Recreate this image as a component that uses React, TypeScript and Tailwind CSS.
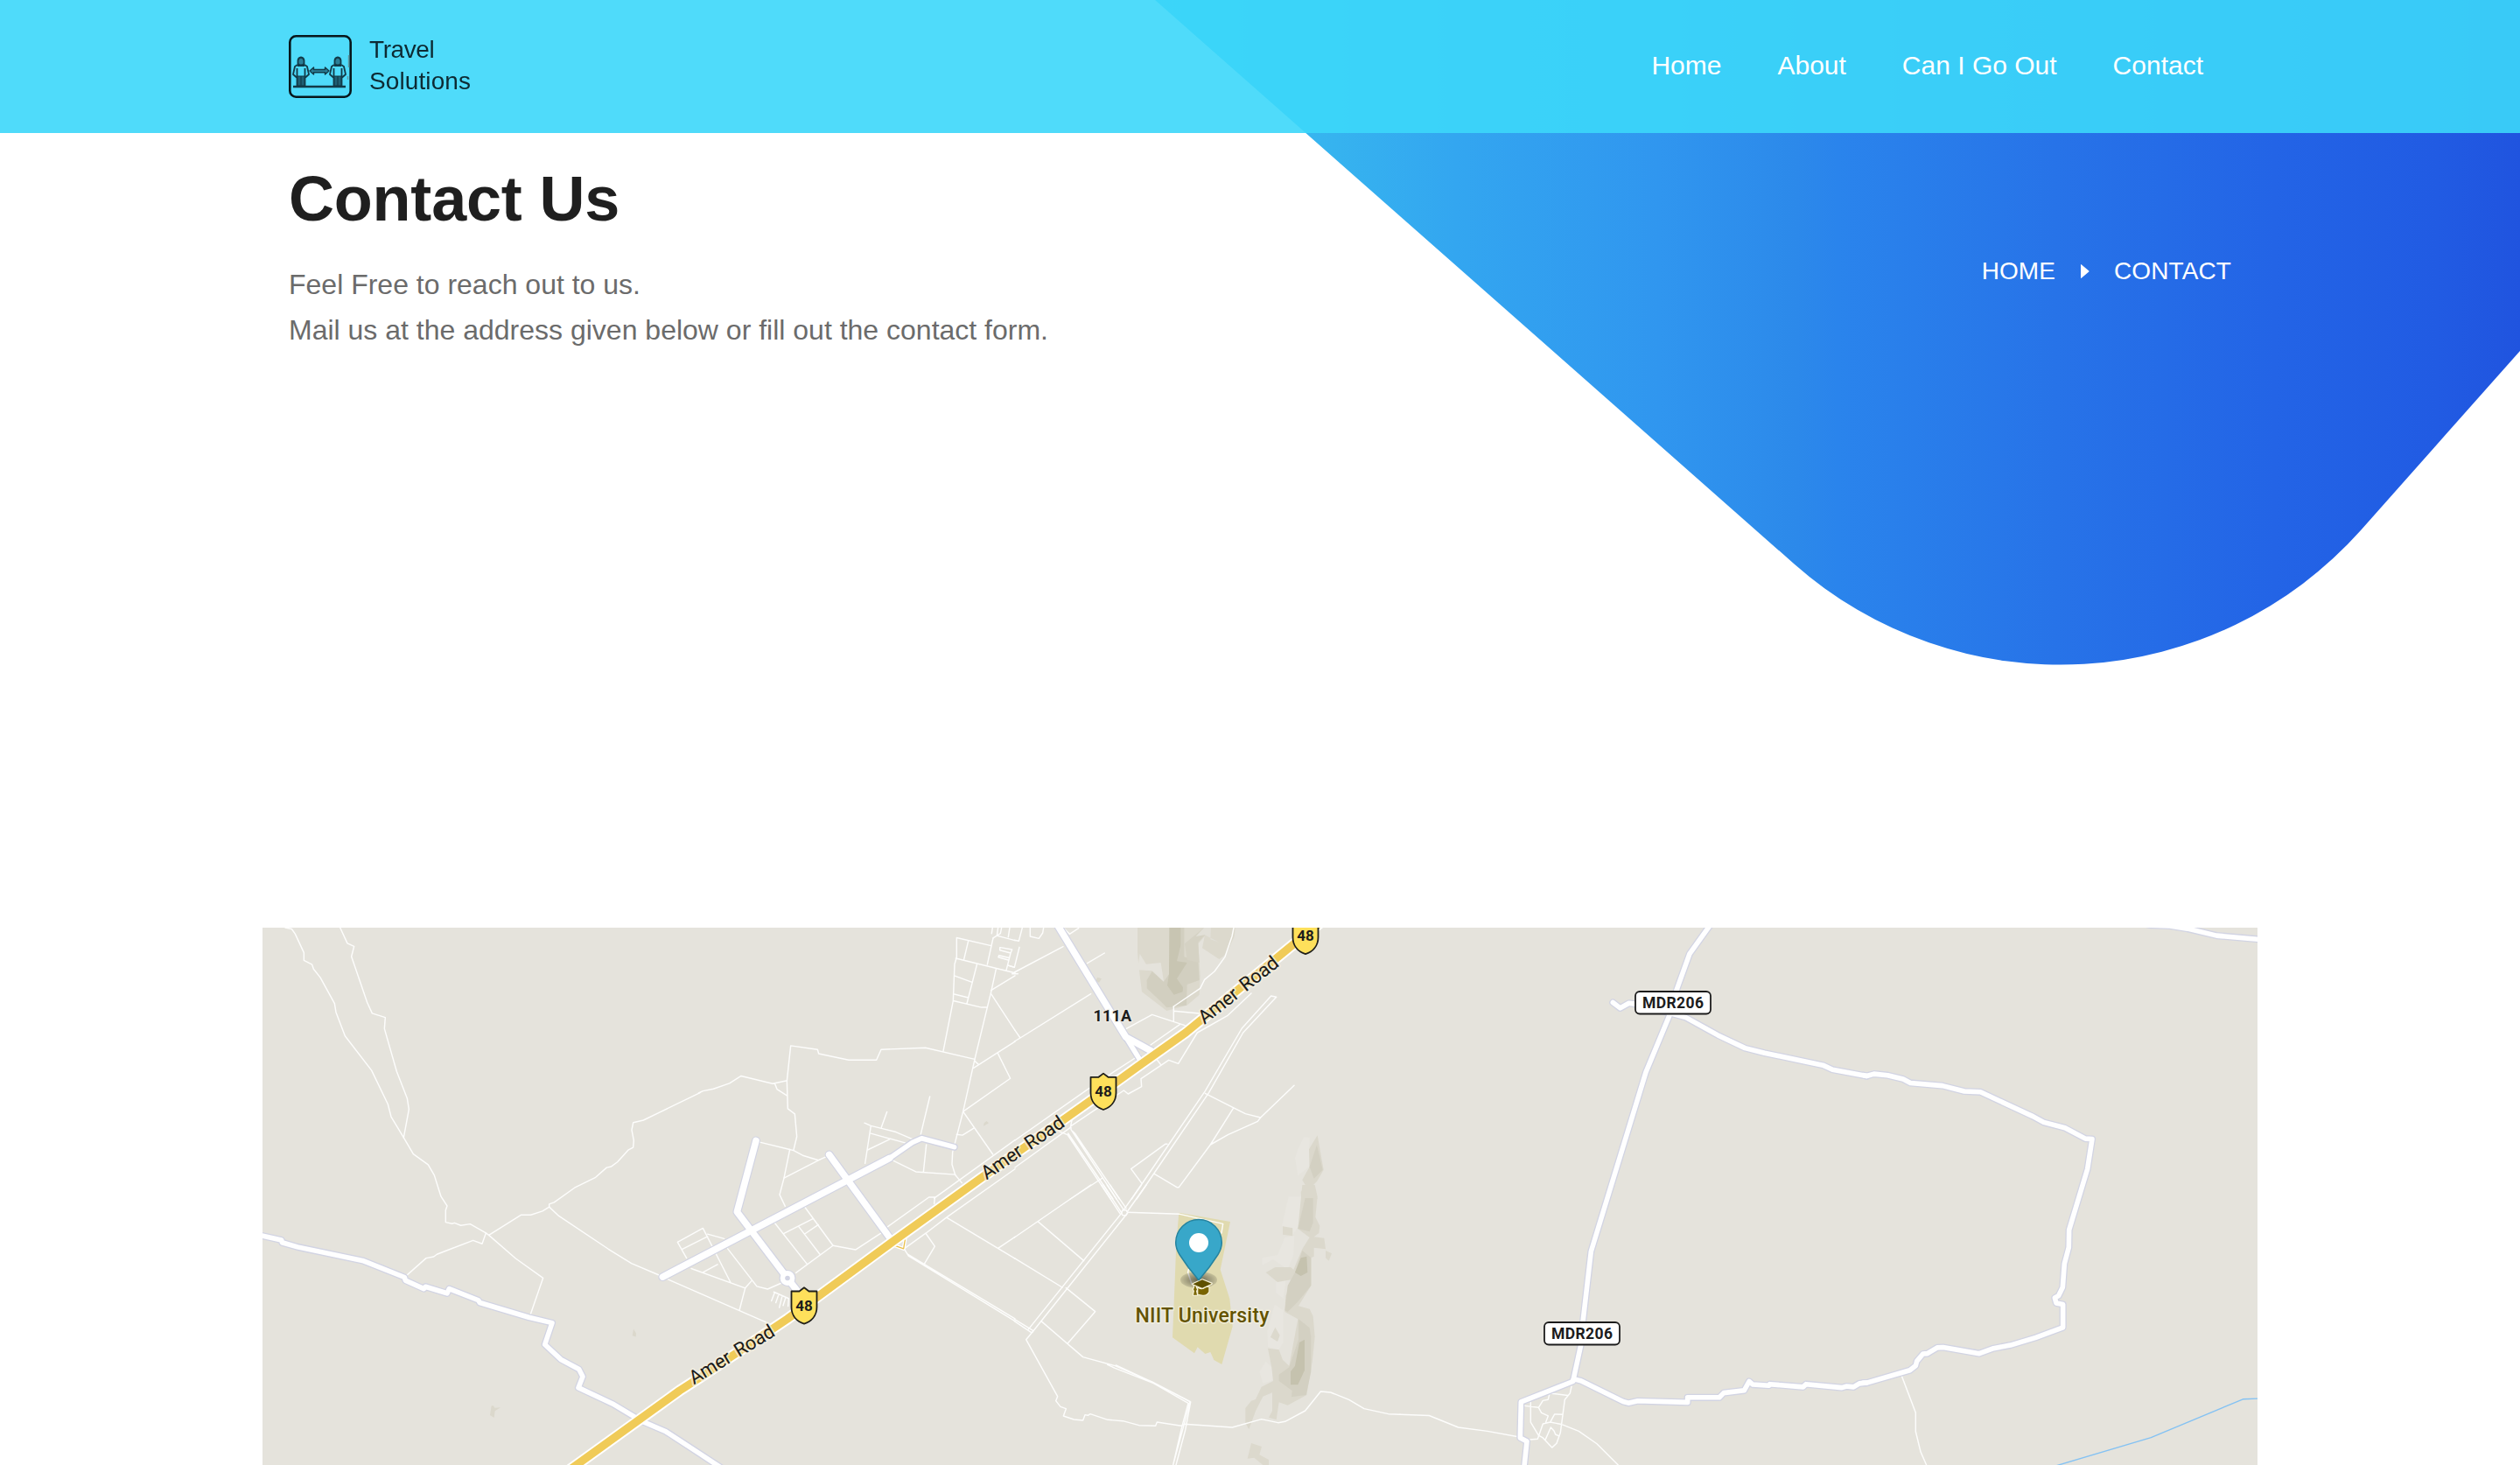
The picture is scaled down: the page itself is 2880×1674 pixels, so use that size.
import React from "react";

const NAV = ["Home", "About", "Can I Go Out", "Contact"];

type Sheet = "a" | "b" | "c" | "d" | "e" | "f";

const SHEETS: Record<Sheet, string> = {
  a: "matrix(.33333 0 0 .39796 300 1050)",
  b: "matrix(.33333 0 0 .39796 700 1050)",
  c: "matrix(.33333 0 0 .33333 1100 1050)",
  d: "matrix(.33333 0 0 .33333 1100 1354)",
  e: "matrix(.33333 0 0 .39796 1700 1050)",
  f: "matrix(.33333 0 0 .39796 2130 1050)",
};

type Shape = [Sheet, string];

const TERRAIN: [Sheet, string, string][] = [
  ["a", "M785 1398L792 1398 796 1404 816 1403 797 1413 794 1432 780 1425Z", "#dbd8cc"],
  ["a", "M1272 1177L1281 1190 1280 1200 1268 1197Z", "#dbd8cc"],
  ["c", "M463 200L477 205 468 218 456 212ZM72 710L74 700 82 693 90 700Z", "#dbd8cc"],
  ["c", "M600 30L600 115 605 170 615 250 700 315 770 296 812 260 815 195 808 85 830 60 822 100 880 138 905 120 932 60 935 30Z", "#dcd9cd"],
  ["c", "M708 30H760V130L808 145 812 210 770 225 768 296 700 304 682 285 632 238 632 210 650 180 690 215 708 190Z", "#d2cfc0"],
  ["c", "M710 30H748V90L735 145 770 150 735 205 756 235 755 250 725 260 702 228 708 190Z", "#c8c5b2"],
  ["c", "M762 85L828 30 850 36 826 60 808 80 812 150 770 140Z", "#d5d2c4"],
  ["c", "M608 120L630 155 680 150 690 215 650 178 600 175Z", "#e5e3dc"],
  ["c", "M828 30H852L850 70 880 80 830 55 800 60Z", "#e2e0d8"],
  ["c", "M1150 790L1170 748 1190 750 1188 850 1150 880 1140 820Z", "#e8e6e0"],
  ["c", "M1217 742L1238 860 1215 900 1200 915 1217 960H1162L1160 935 1180 920 1165 895 1190 850 1188 790Z", "#dbd8cc"],
  ["c", "M1215 775L1235 860 1205 890 1190 850Z", "#d3d0c2"],
  ["d", "M1118 40H1165L1150 145 1130 175 1095 140ZM1105 180L1138 175 1135 240 1115 290 1065 255 1028 275V250L1080 240ZM1075 330L1108 325 1100 390 1075 370ZM1070 410L1100 430 1100 540 1085 565 1047 555 1045 500ZM1040 605L1060 625 1068 668 1030 680 1018 640Z", "#e8e6e0"],
  ["d", "M1165 0H1208L1217 40 1210 110 1225 140 1222 165 1205 178 1240 182 1245 220 1205 215 1205 245 1195 250V345L1152 415 1190 425 1202 450 1208 520 1200 600 1180 720 1115 755 1085 745 1076 805 1050 797 1062 775V712L1030 725 1005 775 982 838 970 815V765L990 740 1005 735 1025 692 1065 672 1060 625 1047 560 1085 565 1098 600 1120 620 1150 460 1105 435 1108 380 1120 350 1125 325 1080 333 1040 300 1072 282 1125 282 1135 290 1165 220 1190 180 1150 150Z", "#dbd8cc"],
  ["d", "M1175 45H1202V130L1190 160 1150 150ZM1165 225L1195 250V345L1150 400 1115 435 1105 430 1115 345 1140 300ZM1152 460L1190 490 1195 520V640L1178 720 1128 727 1130 705 1085 672V650L1120 625 1152 530Z", "#d3d0c2"],
  ["d", "M1160 250L1180 245 1183 300 1160 312 1140 300ZM1155 540L1173 530V635L1150 685H1125V640L1140 620Z", "#c5c2ae"],
  ["d", "M1098 142L1132 148V175L1098 170ZM1072 488L1088 515 1080 537 1056 522ZM1245 225L1266 235 1256 260 1245 250ZM990 885L1026 897 1018 925 1050 942V960H1030L1000 935 977 938Z", "#dcd9cd"],
  ["d", "M742 95L918 126 884 290 916 390 926 485 889 615 862 600 850 573 832 579 806 556 795 577 720 523 728 330 733 200Z", "#e0daaf"],
];

const LANES: Shape[] = [
  ["a", "M78 25L100 29 112 43 142 97V119L170 131 175 144 198 168 247 243 252 268 283 336 374 435 430 532 441 568 484 628 517 675 568 706 589 736 612 797 633 824 628 836 628 871 650 875 658 873 680 880 712 876 766 902 776 908 868 975 962 1031 919 1135"],
  ["a", "M266 25L291 70 314 79 305 108 359 240 376 271 421 283 418 315 460 438 496 515 502 547 484 628"],
  ["a", "M495 1023L561 974 587 970 598 963 722 923 753 933 766 902"],
  ["a", "M776 908L886 850H920L960 839 983 827V819L1000 814 1070 772 1142 742 1180 714 1196 711 1217 698 1255 663 1271 656 1273 636 1266 606 1271 585 1306 578 1500 499"],
  ["a", "M983 827L1016 853 1186 948 1265 989 1363 1024"],
  ["b", "M295 500L310 494 346 488 401 472 441 451 549 473 595 465M557 474L564 489 598 507"],
  ["b", "M598 465L611 364 703 375 707 387 810 405H905L921 375 1073 370 1242 403"],
  ["b", "M598 465L601 545 625 560 632 625 621 663M608 662L588 744 573 792 592 825"],
  ["b", "M505 641L608 662 621 665 652 679 706 693 730 684M588 744L706 693"],
  ["b", "M660 828L756 938 833 950 919 903M943 884L1085 799H1105L1103 818"],
  ["b", "M557 874L667 991M638 883L711 963M588 903L687 861M660 904L706 878M629 1016L756 938"],
  ["b", "M223 928L310 888 405 1044M223 928L254 974M238 949L326 912M326 905L383 918M395 947L495 1055 532 1063 578 1046M270 1004L455 1060 476 1040M310 1015L360 992M455 1060L435 1124"],
  ["b", "M190 1035L540 1163"],
  ["b", "M553 1071L604 1090M556 1073L545 1097M570 1078L560 1102M582 1082L572 1116M594 1086L585 1110M604 1090L602 1112"],
  ["b", "M864 586L886 594 972 612 1030 633M941 554L922 598M886 594L873 664 866 702M886 616L1003 643M873 664L950 633M1088 510L1057 618M1076 648L1066 727M962 694L1040 726 1175 734"],
  ["b", "M1180 54V110L1173 130 1168 235 1134 380M1180 54L1298 77M1220 63L1205 116M1177 113L1380 155M1305 55L1285 131M1250 129L1215 243M1172 163L1233 182M1172 216L1220 226M1168 235L1265 254H1285M1315 144L1298 210 1285 254 1242 403 1202 553 1166 670 1164 705 1175 735 1198 758"],
  ["b", "M1298 205L1380 163M1298 215L1380 320M1380 352L1238 428M1320 384L1364 458 1202 553 1304 676M1180 619L1200 621 1240 600M1242 408L1255 418M1303 25L1300 42M1305 55L1318 48 1322 25M1318 48L1380 62M1334 25L1330 42 1318 48M1362 25L1357 52"],
  ["b", "M1330 82L1370 88 1365 98 1328 90V82M1365 98L1350 148M1357 118L1323 110 1325 105 1360 112M1355 133L1378 139"],
  ["b", "M1380 635L1103 802M1380 718L1145 857 1075 902 1000 947M1380 975L1145 857M1323 945L1380 913M1075 904L1105 940 1068 992M1000 947L1015 968 1380 1155M1003 952L1012 963 1380 1148"],
  ["c", "M170 188L190 188M178 183L345 95M180 382L198 408 440 257M198 408L178 420"],
  ["c", "M178 73L193 76 205 30M232 30V60L262 67 275 48 278 30M195 97L178 166 158 160"],
  ["c", "M345 30L367 52 398 32M428 152L487 117"],
  ["c", "M562 376L650 328 762 365M724 300V352M724 316L812 324"],
  ["c", "M930 30L924 60 900 130 864 180 830 208 815 238 724 300"],
  ["c", "M180 759L435 580M495 540L610 465M645 432L745 362"],
  ["c", "M180 852L370 715 375 690M372 710L553 588 568 600 614 575 612 548 707 484 740 496 805 390 908 332 990 255M668 484L680 500"],
  ["c", "M1076 268L1058 264 958 375 832 590 580 960M1076 268L962 390 845 595 597 960"],
  ["c", "M832 598L970 668 1022 681 1137 571M1022 681L1012 694 910 740 850 774M928 650L850 774 742 920H735L658 874M702 772H695L578 857 615 907"],
  ["c", "M330 728L360 740 508 960M362 735L516 960M372 715V722L528 960M378 728L385 735 538 960M370 960L480 888"],
  ["d", "M476 0L540 98M483 0L546 96M496 0L553 86M506 0L561 80"],
  ["d", "M549 86H561L566 95 561 104H549L545 97Z"],
  ["d", "M613 0L555 82M630 0L566 90M545 97L225 496M566 96L240 504"],
  ["d", "M566 94L745 100 893 133 888 165M775 290L773 300 786 340"],
  ["d", "M440 0L178 180M258 125L416 260M178 251L342 351M178 460L243 500M178 467L236 506"],
  ["d", "M355 353L455 434 360 544M270 467L413 590 523 620 650 675 780 742 760 820 722 960M497 616L523 628 655 680 774 748 752 830 722 960M526 618L660 680 782 744 764 840 732 960"],
  ["d", "M240 504L218 530 326 725 320 740 336 760 355 767 346 792 382 804 413 807 420 788 430 790 438 785 498 805 550 809 605 824 662 826 667 813 750 826 760 820 925 831 1025 803 1082 815 1106 811 1175 774 1228 708 1262 711 1325 736 1377 767 1460 785 1500 787"],
  ["e", "M-300 1423L-200 1426 -100 1460 0 1471 105 1487M148 1388V1445L175 1483 190 1490 221 1518 237 1506 250 1475 265 1380 283 1362 288 1342M128 1398L175 1403 190 1383 208 1380 213 1362 275 1368M175 1403L185 1418 208 1427 200 1445M145 1495L172 1493 190 1450 215 1445 230 1422 258 1423M215 1445L253 1451 313 1471 375 1507 448 1568M198 1496L217 1460 228 1470 233 1480 245 1485"],
  ["f", "M130 1312L178 1418V1472L195 1530 215 1568"],
];

const ROADS: Shape[] = [
  ["a", "M-10 908L65 922 67 929 120 942 343 981 487 1029 490 1038 553 1062 559 1056 633 1075 640 1062 740 1095 745 1102 913 1144 993 1160 968 1222 1023 1265 1085 1293 1098 1314 1083 1346 1200 1392 1300 1442 1383 1472 1500 1536 1580 1580"],
  ["b", "M950 687L1028 642 1060 630 1172 655"],
  ["c", "M560 405L605 478"],
  ["e", "M770 10L693 100 650 200 625 275 543 440 355 955 328 1150 320 1224 293 1328 115 1387 112 1490 135 1500 125 1580"],
  ["e", "M430 240L455 256 485 242 520 246 625 270 680 283 790 334 883 371 950 385 1150 420 1183 433 1300 451"],
  ["e", "M293 1325L300 1322 320 1326 465 1386 483 1390 515 1384 686 1388V1374H795L810 1361 880 1354 897 1328 910 1337 965 1340 968 1336 1082 1344 1092 1336 1215 1346 1230 1342 1255 1344 1275 1334 1300 1332"],
  ["f", "M-2 1332L10 1332 158 1296 178 1283 182 1270 203 1249 218 1248 252 1231 272 1230 396 1248 445 1233 503 1224 590 1202 683 1173V1107L660 1103 655 1088 668 1082 682 1058 688 990 703 943 704 893 767 718 783 632 760 631 690 600 617 584 580 567 400 497 345 495 270 479 160 471 135 460 82 449 35 445 10 451 0 449"],
  ["f", "M940 10L985 18 1050 20 1110 28 1210 48 1360 59"],
];

const STREETS: Shape[] = [
  ["b", "M492 637L427 841 600 1032 645 1080"],
  ["b", "M172 1028L950 687"],
  ["b", "M743 677L950 915"],
  ["c", "M322 15L560 405 655 457"],
];

const AMER = "M640 1687.500L776.700 1589 800 1574 900 1507 1020 1419 1120 1347 1243 1260 1300 1219 1355 1180 1477 1080 1508 1055";

function Lines({ shapes, color, width }: { shapes: Shape[]; color: string; width: number }) {
  return (
    <g fill="none" stroke={color} strokeWidth={width} strokeLinecap="round" strokeLinejoin="round">
      {shapes.map(([sheet, d], i) => (
        <path key={i} d={d} transform={SHEETS[sheet]} vectorEffect="non-scaling-stroke" />
      ))}
    </g>
  );
}

function Shield({ x, y }: { x: number; y: number }) {
  return (
    <g transform={`translate(${x} ${y})`}>
      <path
        d="M-14.500 5H-5.500L0 .8 5.500 5H14.500V23C14.500 33 8 39.500 0 42.200C-8 39.500 -14.500 33 -14.500 23Z"
        fill="#fee05b"
        stroke="#1f1f1a"
        strokeWidth="1.800"
        strokeLinejoin="round"
      />
      <text x="0" y="27" textAnchor="middle" textLength="19.500" fontSize="17" fontWeight="700" fill="#1c1c1c">48</text>
    </g>
  );
}

function Plate({ x, y }: { x: number; y: number }) {
  return (
    <g transform={`translate(${x} ${y})`}>
      <rect x="1" y="1" width="86" height="25.500" rx="5" fill="#fff" stroke="#1c1c1c" strokeWidth="1.800" />
      <text x="9" y="20" textLength="70" fontSize="17.500" fontWeight="700" fill="#1c1c1c">MDR206</text>
    </g>
  );
}

function RoadName({ x, y, angle }: { x: number; y: number; angle: number }) {
  return (
    <text
      transform={`translate(${x} ${y}) rotate(${angle})`}
      className="[word-spacing:3px]"
      textLength="110"
      fontSize="22"
      fill="#1a1a1a"
      stroke="#f3eede"
      strokeOpacity="0.700"
      strokeWidth="4"
      strokeLinejoin="round"
      paintOrder="stroke"
    >
      Amer Road
    </text>
  );
}

function CampusMap() {
  return (
    <svg viewBox="300 1060 2280 614" className="block h-[614px] w-[2280px] bg-[#e5e3dc]" fontFamily="Roboto, 'Liberation Sans', sans-serif">
      <defs>
        <radialGradient id="pinShadow">
          <stop offset="0" stopColor="#000" stopOpacity="0.550" />
          <stop offset="1" stopColor="#000" stopOpacity="0.120" />
        </radialGradient>
      </defs>
      {TERRAIN.map(([sheet, d, fill], i) => (
        <path key={i} d={d} fill={fill} transform={SHEETS[sheet]} />
      ))}
      <Lines shapes={[["f", "M660 1570L985 1489 1300 1379 1360 1377"]]} color="#84c2f3" width={1.4} />
      <Lines shapes={LANES} color="#fdfdfc" width={1.45} />
      <Lines shapes={ROADS} color="#d2d4e3" width={8.2} />
      <Lines shapes={STREETS} color="#d2d4e3" width={10} />
      <circle cx="900" cy="1460.500" r="9" fill="#fff" stroke="#d2d4e3" strokeWidth="1.200" />
      <Lines shapes={ROADS} color="#fff" width={5.6} />
      <Lines shapes={STREETS} color="#fff" width={7.6} />
      <circle cx="900" cy="1460.500" r="2.800" fill="#d2d4e3" />
      <Lines shapes={[["b", "M958 935L998 947 1005 912"]]} color="#fff" width={4} />
      <Lines shapes={[["b", "M958 935L998 947 1005 912"]]} color="#eabf48" width={1.3} />
      <path d={AMER} fill="none" stroke="#fff" strokeWidth="13" strokeLinejoin="round" />
      <path d={AMER} fill="none" stroke="#f0cb58" strokeWidth="9.200" strokeLinejoin="round" />

      <RoadName x={793} y={1582.5} angle={-31.2} />
      <RoadName x={1127.5} y={1348.5} angle={-34.4} />
      <RoadName x={1376.5} y={1171} angle={-38.2} />
      <Shield x={919} y={1470.5} />
      <Shield x={1261} y={1225.8} />
      <Shield x={1492} y={1048} />
      <Plate x={1868} y={1132} />
      <Plate x={1764} y={1510} />
      <text x="1249.500" y="1167" textLength="43.500" fontSize="18" fontWeight="700" fill="#1c1c1c" stroke="#f1efe9" strokeOpacity="0.700" strokeWidth="2.500" paintOrder="stroke">111A</text>

      <ellipse cx="1370" cy="1462.500" rx="21" ry="9.500" fill="url(#pinShadow)" />
      <g transform={SHEETS.d} stroke="#f6f2da" strokeWidth="7" strokeLinejoin="round" paintOrder="stroke" fill="#7a6500">
        <path d="M808 354Q822 362 834 352L844 350V366Q838 378 824 377L808 374Z" />
        <path d="M795 342H801L800 352 804 358 801 364 804 377H792L795 364 792 358 795 352Z" />
        <path d="M790 340L822 325 854 338 822 353Z" fill="#5f5000" />
      </g>
      <path
        d="M1370 1462.700L1358 1448 1348 1433.500Q1343.700 1426.500 1343.700 1419.800A26.300 26.300 0 0 1 1396.300 1419.800Q1396.300 1426.500 1392 1433.500L1382 1448Z"
        fill="#38a7c9"
        stroke="#25839f"
        strokeWidth="1.500"
        strokeLinejoin="round"
      />
      <circle cx="1370" cy="1420" r="11" fill="#fff" />
      <text x="1297.500" y="1511" textLength="153" fontSize="23" fontWeight="500" fill="#635300" stroke="#f5f2e2" strokeWidth="3" strokeOpacity="0.800" paintOrder="stroke" strokeLinejoin="round">
        NIIT University
      </text>
    </svg>
  );
}

function Person({ x }: { x: number }) {
  return (
    <g transform={`translate(${x} 0)`} fill="none" stroke="#123a48" strokeWidth="1.800" strokeLinejoin="round">
      <path d="M-3.500 33V29Q-3 26 0 25.500Q3 26 3.500 29V33Q0 36 -3.500 33Z" fill="#2b7f97" />
      <path d="M-4 34L-7 36 -9 45 -5 48.500M4 34L7 36 9 45 5 48.500M-4.500 38V58M4.500 38V58M-4 35H4" />
      <path d="M-4 47H4V58H-4Z" fill="#1f5f73" strokeWidth="1" />
      <path d="M0 47V58" strokeWidth="1.200" />
    </g>
  );
}

function LogoMark() {
  return (
    <svg viewBox="0 0 72 72" className="h-[72px] w-[72px] blur-[0.3px]">
      <rect x="1.300" y="1.300" width="69.400" height="69.400" rx="7" fill="none" stroke="#07171c" strokeWidth="2.600" />
      <Person x={14} />
      <Person x={56} />
      <path d="M24 41L28.500 37V39.500H41.500V37L46 41 41.500 45V42.800H28.500V45Z" fill="#2b7f97" stroke="#123a48" strokeWidth="1.400" strokeLinejoin="round" />
      <path d="M5 59H65" stroke="#123a48" strokeWidth="2.400" />
      <path d="M68.500 23V37M67.500 47V51" stroke="#5f9aa4" strokeWidth="1.400" />
    </svg>
  );
}

function HeroShape() {
  return (
    <svg viewBox="1300 0 1580 780" className="absolute top-0 right-0 h-[780px] w-[1580px]">
      <defs>
        <linearGradient id="hero" gradientUnits="userSpaceOnUse" x1="1320" y1="0" x2="2880" y2="0">
          <stop offset="0" stopColor="#3cc4f2" />
          <stop offset="0.130" stopColor="#36b3ef" />
          <stop offset="0.220" stopColor="#33a6f0" />
          <stop offset="0.370" stopColor="#3096ef" />
          <stop offset="0.470" stopColor="#2c89ea" />
          <stop offset="0.500" stopColor="#2a84ec" />
          <stop offset="0.660" stopColor="#2773e8" />
          <stop offset="0.820" stopColor="#2364e6" />
          <stop offset="0.940" stopColor="#215be3" />
          <stop offset="1" stopColor="#2054df" />
        </linearGradient>
      </defs>
      <path d="M1320 0L2050 644A460 460 0 0 0 2698 606L2880 401V0Z" fill="url(#hero)" />
    </svg>
  );
}

export default function App() {
  return (
    <div className="relative h-[1674px] w-[2880px] overflow-hidden bg-white font-['Liberation_Sans',Arial,sans-serif]">
      <HeroShape />

      <header className="relative flex h-[152px] items-center justify-between bg-[#3cd7f9]/[.9] pr-[362px] pl-[330px]">
        <a className="flex items-center gap-[20px]">
          <LogoMark />
          <span className="pb-[2px] text-[28px] leading-[36px] text-[#0d2a33] blur-[0.4px]">
            <span className="tracking-[-0.4px]">Travel</span>
            <br />
            <span className="tracking-[0.1px]">Solutions</span>
          </span>
        </a>
        <nav className="flex gap-16 pb-[3px] text-[30px] text-white">
          {NAV.map((item) => (
            <a key={item}>{item}</a>
          ))}
        </nav>
      </header>

      <main className="relative px-[300px]">
        <section className="flex h-[908px] justify-between px-[30px] pt-[35px]">
          <div>
            <h1 className="text-[72px] leading-[80px] font-bold tracking-[-0.2px] text-[#1f1f1f]">Contact Us</h1>
            <p className="mt-[32px] text-[32px] leading-[52px] text-[#6b6b6b]">
              Feel Free to reach out to us.
              <br />
              Mail us at the address given below or fill out the contact form.
            </p>
          </div>
          <div className="mt-[107px] flex h-[32px] items-center text-[28px] leading-[32px] tracking-[0.1px] text-white">
            <a>HOME</a>
            <svg viewBox="0 0 10 16" className="mr-[28px] ml-[29px] h-[16px] w-[10px]">
              <path d="M0 .8Q0 -.4 1 .5L9.300 7.400Q9.900 8 9.300 8.600L1 15.500Q0 16.400 0 15.200Z" fill="#fff" />
            </svg>
            <span>CONTACT</span>
          </div>
        </section>
        <CampusMap />
      </main>
    </div>
  );
}
